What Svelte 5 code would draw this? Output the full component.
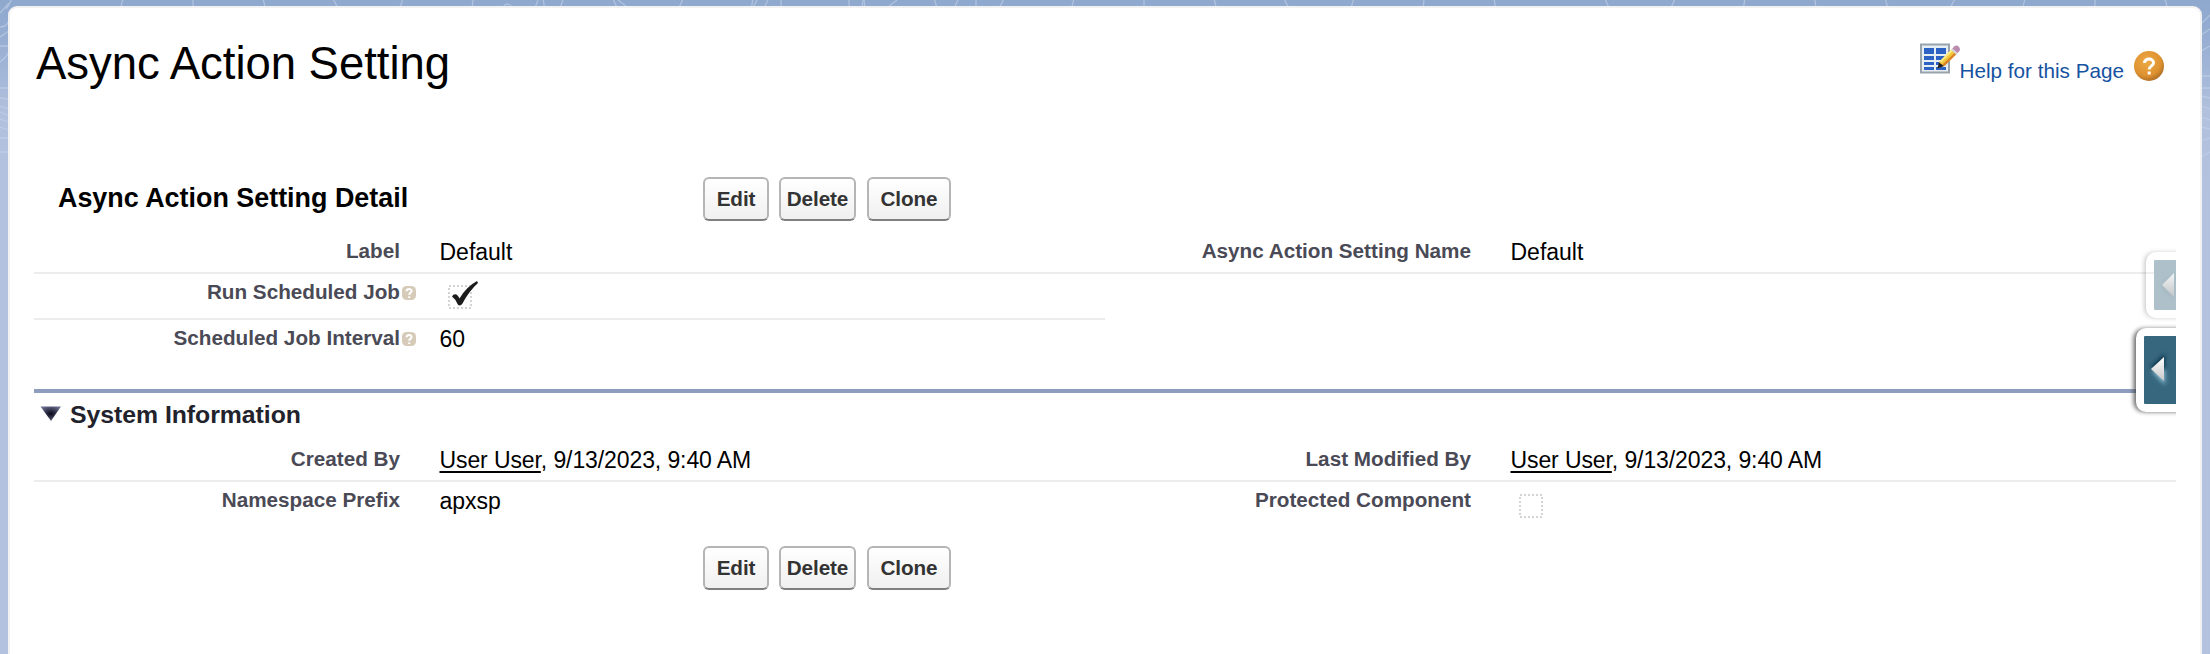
<script>
  const actions = ['Edit', 'Delete', 'Clone'];
  const topLines = Array.from({ length: 30 }, (_, i) => {
    const x = 12 + i * 74 + ((i * 37) % 41);
    const d = ((i * 29) % 13) - 6;
    return `M${x} -2Q${x + d / 3} 4 ${x + d} 9`;
  }).join('');
</script>

{#snippet buttons()}
  <div class="buttons">
    {#each actions as a}<button class={a.toLowerCase()}>{a}</button>{/each}
  </div>
{/snippet}

{#snippet hint()}
  <svg class="hint" width="14" height="14" viewBox="0 0 14 14">
    <rect width="14" height="14" rx="4.500" fill="#d6cbb9" />
    <path d="M4.6 5.2C4.6 2.4 9.6 2.4 9.6 5.1C9.6 7 7.2 6.8 7.2 8.8M7.2 10.2V12" fill="none" stroke="#fff" stroke-width="2" />
  </svg>
{/snippet}

{#snippet box(checked)}
  <svg class="box" width="34" height="32" viewBox="0 0 34 32">
    <rect x="2" y="7" width="22" height="22" fill="none" stroke="#d4d4d4" stroke-width="2" stroke-dasharray="2 2" />
    {#if checked}
      <path d="M5 17.500Q6.500 14.500 9.500 15.500Q11.500 17 12.500 19.500Q19 8 30 2L31 4Q22 12 15.500 24.500Q13 28 10.800 25.500Q8.500 20 5 17.500Z" fill="#1c1c1c" />
    {/if}
  </svg>
{/snippet}

<div class="page">
  <svg class="pattern" width="2210" height="160" viewBox="0 0 2210 160">
    <g fill="none" stroke="#c5d4ea" stroke-width="1.300" opacity=".6">
      <path d={topLines} />
      <path d="M535 8L538 0M560 8L563 0M504 6Q507 2 511 6M618 0L627 7M753 8L757 0M764 8L768 0M781 8V0M849 8V0M862 8L863 0M888 7L897 0M954 8L958 0M976 0V8" />
      <path d="M0 13L9 3M0 27Q7 27 9 20M0 37L9 31M0 46H9M0 62Q6 58 9 52M0 88H9M0 98L9 99M0 106L9 109M0 112L9 116M0 119L9 122M0 127L9 130M0 138H9M0 152H9" />
      <path d="M2201 24L2210 15M2201 35L2210 29M2201 51L2210 46M2201 76H2210M2201 88H2210M2201 96L2210 98M2201 106L2210 109M2201 117L2210 120M2201 127L2210 129M2201 141L2210 138M2201 157L2210 152" />
    </g>
  </svg>

  <main class="card">
    <header>
      <h1>Async Action Setting</h1>
      <div class="links">
        <svg class="layout" width="41" height="32" viewBox="0 0 41 32">
          <rect x="1" y="1.500" width="28" height="28" fill="#e6edf3" stroke="#98a3ac" stroke-width="2" />
          <path d="M4 5h10v6H4zM16 5h10v6H16zM4 13h10v4H4zM16 13h10v4H16zM4 19h10v3H4zM16 19h10v3H16zM4 24h10v3H4zM16 24h10v3H16z" fill="#2c62c4" />
          <path d="M18 25L19.500 18.500L32 6L37 10.500L24.500 23Z" fill="#f3c73a" />
          <path d="M24.500 23L37 10.500L35.500 9L22.500 21.500Z" fill="#d9822b" />
          <path d="M20 18L32 6L33.300 7.200L21 19.500Z" fill="#fff08a" />
          <path d="M17.500 25.500L19 19.500L24 23Z" fill="#1e1c20" />
          <path d="M32 6L34 3.500Q37 1.500 39 4Q41 6.500 39 8.500L37 10.500Z" fill="#b98bb0" />
          <path d="M31 7L32.500 5.500L37.500 10L36 11.500Z" fill="#d5d5da" />
        </svg>
        <a href="#help">Help for this Page</a>
        <svg class="help" width="30" height="30" viewBox="0 0 30 30">
          <defs>
            <radialGradient id="orb" cx=".42" cy=".35" r=".68">
              <stop offset="0" stop-color="#edaa45" /><stop offset=".7" stop-color="#de9130" /><stop offset="1" stop-color="#a96c25" />
            </radialGradient>
          </defs>
          <circle cx="15" cy="15" r="15" fill="url(#orb)" />
          <path d="M10.500 12C10.500 6.700 19.700 6.800 19.500 12C19.400 15 15.200 14.800 15.200 18.500M15.200 20.500V23.500" fill="none" stroke="#fff" stroke-width="3" />
        </svg>
      </div>
    </header>

    <section class="detail">
      <div class="titlebar">
        <h2>Async Action Setting Detail</h2>
        {@render buttons()}
      </div>
      <div class="row r1">
        <div class="label">Label</div><div class="value">Default</div>
        <div class="label">Async Action Setting Name</div><div class="value">Default</div>
      </div>
      <div class="row r2 half">
        <div class="label">Run Scheduled Job{@render hint()}</div><div class="value">{@render box(true)}</div>
      </div>
      <div class="row r3">
        <div class="label">Scheduled Job Interval{@render hint()}</div><div class="value">60</div>
      </div>

      <h3>
        <svg width="22" height="18" viewBox="0 0 22 18">
          <defs>
            <radialGradient id="tri" cx=".5" cy=".5" r=".6">
              <stop offset="0" stop-color="#080818" /><stop offset="1" stop-color="#6d7092" />
            </radialGradient>
          </defs>
          <path d="M0.500 1.500H21L11 16Z" fill="url(#tri)" />
        </svg>
        <span>System Information</span>
      </h3>
      <div class="row r4">
        <div class="label">Created By</div><div class="value"><a href="#user">User User</a>, 9/13/2023, 9:40 AM</div>
        <div class="label">Last Modified By</div><div class="value"><a href="#user">User User</a>, 9/13/2023, 9:40 AM</div>
      </div>
      <div class="row r5">
        <div class="label">Namespace Prefix</div><div class="value">apxsp</div>
        <div class="label">Protected Component</div><div class="value">{@render box(false)}</div>
      </div>
      <div class="footer">{@render buttons()}</div>
    </section>
  </main>

  <svg class="tabs" width="60" height="190" viewBox="0 0 60 190">
    <defs>
      <linearGradient id="arrow" x1="0" y1="0" x2="0" y2="1">
        <stop offset="0" stop-color="#fff" /><stop offset="1" stop-color="#c8c8c8" />
      </linearGradient>
      <filter id="soft" x="-30%" y="-30%" width="160%" height="160%"><feGaussianBlur stdDeviation="2" /></filter>
    </defs>
    <rect x="28" y="12" width="50" height="66" rx="10" fill="#555" opacity=".28" filter="url(#soft)" />
    <rect x="30" y="12" width="50" height="66" rx="10" fill="#fff" />
    <g opacity=".4">
      <rect x="30" y="32" width="30" height="2" fill="#d8d8d8" />
      <rect x="38" y="20" width="24" height="50" rx="1" fill="#36677e" />
      <path d="M58 32L44 46L58 60Z" fill="#173e52" filter="url(#soft)" opacity=".6" />
    </g>
    <path d="M58 33L46 45L58 57Z" fill="url(#arrow)" opacity=".85" />
    <rect x="17.500" y="88.500" width="60" height="83.500" rx="10" fill="#333" opacity=".7" filter="url(#soft)" />
    <rect x="20" y="88" width="60" height="84" rx="10" fill="#fff" />
    <rect x="28" y="96" width="34" height="68" rx="1" fill="#36677e" />
    <path d="M49 114L34 128L48 130Z" fill="#062c40" filter="url(#soft)" />
    <path d="M35 130L49 130V145Z" fill="#8ec0d6" filter="url(#soft)" />
    <path d="M48 117L35 129L48 141Z" fill="url(#arrow)" />
  </svg>
</div>

<style>
  :global(body) { margin: 0; }
  .page {
    position: relative; box-sizing: border-box; width: 2210px; height: 654px; padding: 6px 8px 0; overflow: hidden;
    font-family: "Liberation Sans", Arial, sans-serif; font-size: 23px; color: #000;
    background: linear-gradient(#8fa8cd 0, #94acd1 30px, #b0c0dd 110px, #b2c2df 200px);
  }
  .pattern { position: absolute; left: 0; top: 0; }
  .card {
    position: relative; box-sizing: border-box; height: 660px; padding: 0 24px;
    background: #fff; border: 2px solid #f3f2f2; border-radius: 9px;
  }
  header { display: flex; justify-content: space-between; height: 158px; }
  h1 { margin: 29px 0 0 2px; font-size: 45.500px; line-height: 54px; font-weight: 400; letter-spacing: -.04px; }
  .links { display: flex; align-items: flex-start; padding-right: 12px; font-size: 20.700px; line-height: 26px; }
  .layout { margin-top: 35px; }
  .links a { margin: 50px 1px 0 -1px; color: #15529f; text-decoration: none; white-space: nowrap; }
  .help { margin: 43px 0 0 9px; }
  .titlebar { display: flex; height: 66px; }
  h2 { width: 645px; margin: 15px 0 0; padding-left: 24px; font-size: 26.900px; line-height: 34px; }
  .buttons { display: flex; align-items: flex-start; padding-top: 11px; }
  button {
    box-sizing: border-box; height: 44px; padding: 0; border: 2px solid #b5b5b5; border-bottom-color: #7f7f7f;
    border-radius: 6px; background: linear-gradient(#fff, #f0f0f0); color: #333;
    font: bold 20.700px "Liberation Sans", Arial, sans-serif; letter-spacing: -.1px;
  }
  .edit { width: 66px; margin-right: 10px; }
  .delete { width: 77px; margin-right: 11px; }
  .clone { width: 84px; }
  .row { display: grid; grid-template-columns: 366px 705px 366px 705px; box-sizing: border-box; width: 2142px; }
  .label {
    display: flex; justify-content: flex-end; position: relative; padding-top: 6px;
    font-size: 20.700px; line-height: 26px; font-weight: 700; color: #4a4a56;
  }
  .value { padding: 7px 0 0 39.500px; line-height: 26px; }
  .value a { color: #000; text-underline-offset: 3px; text-decoration-thickness: 2px; }
  .hint { position: absolute; left: 368px; top: 12px; }
  .box { display: block; margin-left: 7.500px; }
  .r1 { height: 42px; border-bottom: 2px solid #ececec; }
  .r2 { height: 46px; border-bottom: 2px solid #ececec; }
  .half { grid-template-columns: 366px 705px; width: 1071px; }
  .r2 .value { padding-top: 5px; }
  .r2 .label, .r3 .label, .r5 .label { padding-top: 5px; }
  .r3 { height: 69px; }
  .r3 .value, .r5 .value { padding-top: 6px; }
  h3 {
    display: flex; box-sizing: border-box; height: 51px; margin: 0; border-top: 4px solid #8e9dbe;
    font-size: 24.800px; line-height: 30px; color: #22222c;
  }
  h3 svg { margin: 12px 8px 0 6px; }
  h3 span { margin-top: 7px; letter-spacing: -.03px; }
  .r4 { height: 42px; border-bottom: 2px solid #ececec; }
  .r4 .value { letter-spacing: -.1px; }
  .r5 { height: 53px; }
  .footer { padding-left: 669px; }
  .tabs { position: absolute; left: 2116px; top: 240px; }
</style>
